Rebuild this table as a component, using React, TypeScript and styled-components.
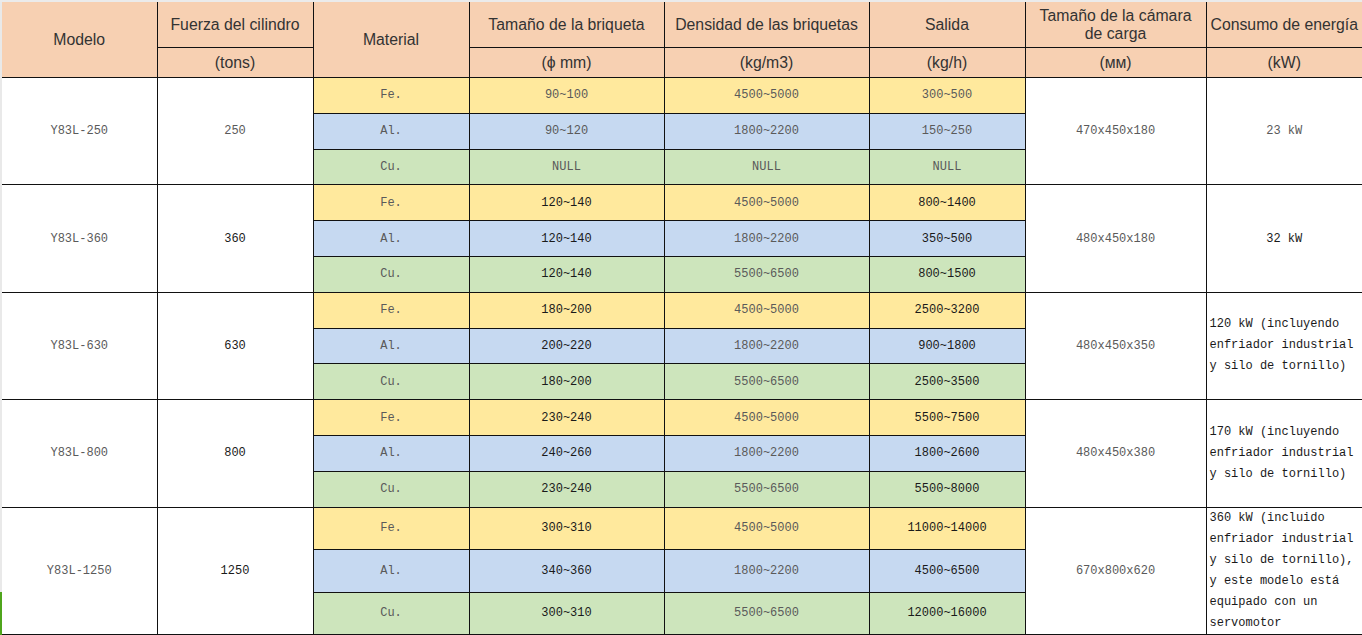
import React from "react";
import styled, { createGlobalStyle } from "styled-components";

const GlobalStyle = createGlobalStyle`
  html, body { margin: 0; padding: 0; background: #ffffff; }
  #root { width: 1362px; }
`;

const Page = styled.div`
  border-top: 2px solid #ebebeb;
  display: flex;
  width: 1362px;
  height: 633px;
  overflow: hidden;
`;

const Gutter = styled.div`
  width: 2px;
  flex: 0 0 2px;
  display: flex;
  flex-direction: column;
`;

const GutterFill = styled.div`
  flex: 1;
  background: #e9e9e9;
`;

const GutterMark = styled.div`
  height: 43px;
  background: #4fa51c;
`;

const Table = styled.table`
  border-collapse: collapse;
  table-layout: fixed;
  width: 1360px;
  flex: 0 0 1360px;
  align-self: flex-start;
`;

const HeadCell = styled.th<{ $h: number }>`
  height: ${(p) => p.$h}px;
  background: #f7d0b2;
  color: #333333;
  font-family: "Liberation Sans", Arial, sans-serif;
  font-weight: 400;
  font-size: 15.8px;
  line-height: 18px;
  text-align: center;
  vertical-align: middle;
  padding: 0 2px;
  border: 1px solid #111111;
  border-top: none;
  white-space: normal;
  &:first-child { border-left: none; }
  &:last-child { border-right: none; }
`;

type Tone = "fe" | "al" | "cu" | "plain";

const tones: Record<Tone, string> = {
  fe: "#ffe99d",
  al: "#c6d9f1",
  cu: "#cde5bc",
  plain: "#ffffff",
};

const Cell = styled.td<{ $tone: Tone; $dark?: boolean; $h?: number }>`
  ${(p) => (p.$h ? `height: ${p.$h}px;` : "")}
  background: ${(p) => tones[p.$tone]};
  color: ${(p) => (p.$dark ? "#1a1a1a" : "#5a5a5a")};
  font-family: "Liberation Mono", "Courier New", monospace;
  font-size: 12px;
  line-height: 14px;
  text-align: center;
  vertical-align: middle;
  padding: 0;
  border: 1px solid #111111;
  &:first-child { border-left: none; }
  &:last-child { border-right: none; }
`;

const NoteCell = styled.td<{ $dark?: boolean }>`
  background: #ffffff;
  color: ${(p) => (p.$dark ? "#1a1a1a" : "#5a5a5a")};
  font-family: "Liberation Mono", "Courier New", monospace;
  font-size: 12px;
  line-height: 21px;
  text-align: left;
  vertical-align: middle;
  padding: 0 0 0 3px;
  border: 1px solid #111111;
  border-right: none;
  white-space: pre-line;
`;

type Group = {
  model: string;
  force: string;
  rows: { mat: string; tone: Tone; size: string; dens: string; out: string }[];
  chamber: string;
  power: string;
  note?: boolean;
  dark: boolean;
  h: number;
};

const groups: Group[] = [
  {
    model: "Y83L-250",
    force: "250",
    rows: [
      { mat: "Fe.", tone: "fe", size: "90~100", dens: "4500~5000", out: "300~500" },
      { mat: "Al.", tone: "al", size: "90~120", dens: "1800~2200", out: "150~250" },
      { mat: "Cu.", tone: "cu", size: "NULL", dens: "NULL", out: "NULL" },
    ],
    chamber: "470x450x180",
    power: "23 kW",
    dark: false,
    h: 34.8,
  },
  {
    model: "Y83L-360",
    force: "360",
    rows: [
      { mat: "Fe.", tone: "fe", size: "120~140", dens: "4500~5000", out: "800~1400" },
      { mat: "Al.", tone: "al", size: "120~140", dens: "1800~2200", out: "350~500" },
      { mat: "Cu.", tone: "cu", size: "120~140", dens: "5500~6500", out: "800~1500" },
    ],
    chamber: "480x450x180",
    power: "32 kW",
    dark: true,
    h: 34.8,
  },
  {
    model: "Y83L-630",
    force: "630",
    rows: [
      { mat: "Fe.", tone: "fe", size: "180~200", dens: "4500~5000", out: "2500~3200" },
      { mat: "Al.", tone: "al", size: "200~220", dens: "1800~2200", out: "900~1800" },
      { mat: "Cu.", tone: "cu", size: "180~200", dens: "5500~6500", out: "2500~3500" },
    ],
    chamber: "480x450x350",
    power: "120 kW (incluyendo\nenfriador industrial\ny silo de tornillo)",
    note: true,
    dark: true,
    h: 34.8,
  },
  {
    model: "Y83L-800",
    force: "800",
    rows: [
      { mat: "Fe.", tone: "fe", size: "230~240", dens: "4500~5000", out: "5500~7500" },
      { mat: "Al.", tone: "al", size: "240~260", dens: "1800~2200", out: "1800~2600" },
      { mat: "Cu.", tone: "cu", size: "230~240", dens: "5500~6500", out: "5500~8000" },
    ],
    chamber: "480x450x380",
    power: "170 kW (incluyendo\nenfriador industrial\ny silo de tornillo)",
    note: true,
    dark: true,
    h: 34.8,
  },
  {
    model: "Y83L-1250",
    force: "1250",
    rows: [
      { mat: "Fe.", tone: "fe", size: "300~310", dens: "4500~5000", out: "11000~14000" },
      { mat: "Al.", tone: "al", size: "340~360", dens: "1800~2200", out: "4500~6500" },
      { mat: "Cu.", tone: "cu", size: "300~310", dens: "5500~6500", out: "12000~16000" },
    ],
    chamber: "670x800x620",
    power:
      "360 kW (incluido\nenfriador industrial\ny silo de tornillo),\ny este modelo está\nequipado con un\nservomotor",
    note: true,
    dark: true,
    h: 41.5,
  },
];

const widths = [155, 156, 156, 195, 205, 156, 181, 156];

export default function App() {
  return (
    <>
      <GlobalStyle />
      <Page>
        <Gutter>
          <GutterFill />
          <GutterMark />
        </Gutter>
        <Table>
          <colgroup>
            {widths.map((w, i) => (
              <col key={i} style={{ width: w }} />
            ))}
          </colgroup>
          <thead>
            <tr>
              <HeadCell $h={45} rowSpan={2}>Modelo</HeadCell>
              <HeadCell $h={45}>Fuerza del cilindro</HeadCell>
              <HeadCell $h={45} rowSpan={2}>Material</HeadCell>
              <HeadCell $h={45}>Tamaño de la briqueta</HeadCell>
              <HeadCell $h={45}>Densidad de las briquetas</HeadCell>
              <HeadCell $h={45}>Salida</HeadCell>
              <HeadCell $h={45}>
                Tamaño de la cámara
                <br />
                de carga
              </HeadCell>
              <HeadCell $h={45}>Consumo de energía</HeadCell>
            </tr>
            <tr>
              <HeadCell $h={29}>(tons)</HeadCell>
              <HeadCell $h={29}>(ϕ mm)</HeadCell>
              <HeadCell $h={29}>(kg/m3)</HeadCell>
              <HeadCell $h={29}>(kg/h)</HeadCell>
              <HeadCell $h={29}>(мм)</HeadCell>
              <HeadCell $h={29}>(kW)</HeadCell>
            </tr>
          </thead>
          <tbody>
            {groups.map((g) =>
              g.rows.map((r, i) => (
                <tr key={g.model + r.mat}>
                  {i === 0 && (
                    <Cell $tone="plain" rowSpan={3}>
                      {g.model}
                    </Cell>
                  )}
                  {i === 0 && (
                    <Cell $tone="plain" $dark={g.dark} rowSpan={3}>
                      {g.force}
                    </Cell>
                  )}
                  <Cell $tone={r.tone} $h={g.h}>
                    {r.mat}
                  </Cell>
                  <Cell $tone={r.tone} $dark={g.dark}>
                    {r.size}
                  </Cell>
                  <Cell $tone={r.tone}>{r.dens}</Cell>
                  <Cell $tone={r.tone} $dark={g.dark}>
                    {r.out}
                  </Cell>
                  {i === 0 && (
                    <Cell $tone="plain" rowSpan={3}>
                      {g.chamber}
                    </Cell>
                  )}
                  {i === 0 &&
                    (g.note ? (
                      <NoteCell $dark={g.dark} rowSpan={3}>
                        {g.power}
                      </NoteCell>
                    ) : (
                      <Cell $tone="plain" $dark={g.dark} rowSpan={3}>
                        {g.power}
                      </Cell>
                    ))}
                </tr>
              ))
            )}
          </tbody>
        </Table>
      </Page>
    </>
  );
}
